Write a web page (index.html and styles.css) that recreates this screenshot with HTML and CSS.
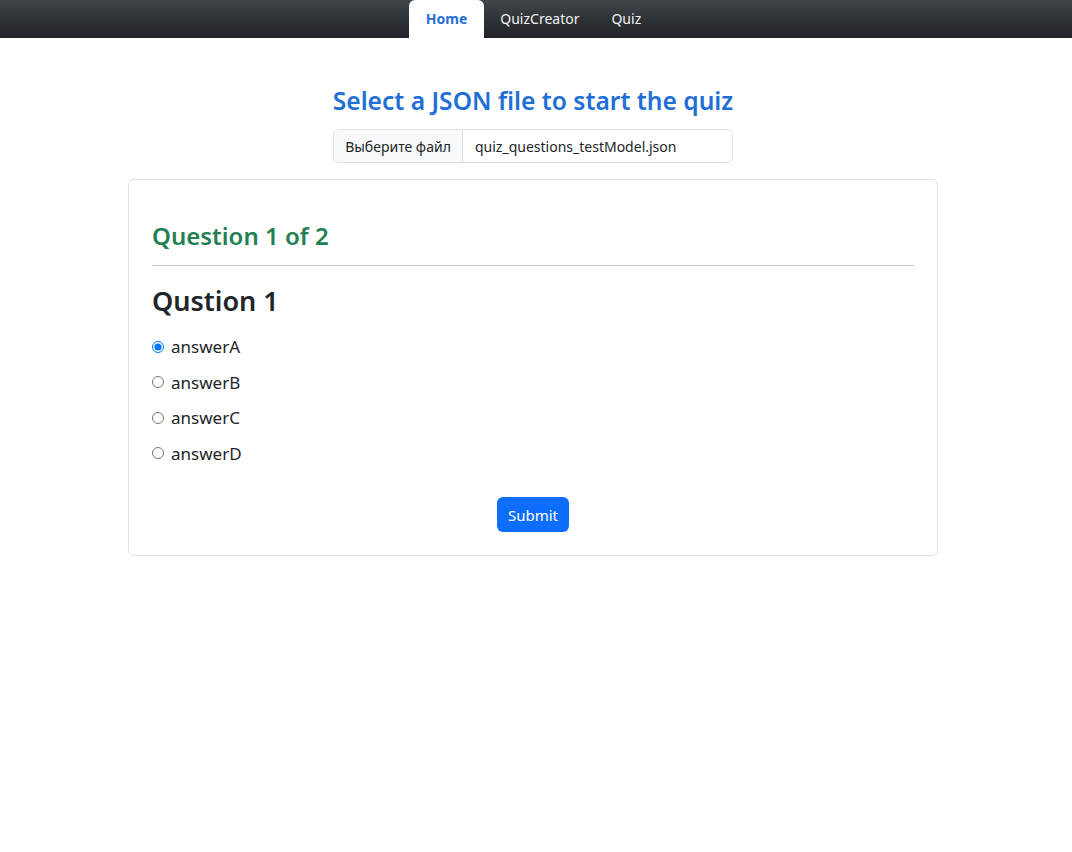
FILE: index.html
```html
<!DOCTYPE html>
<html lang="en">
<head>
<meta charset="utf-8">
<title>Quiz</title>
<link rel="stylesheet" href="styles.css">
</head>
<body>
<nav class="navbar">
  <ul class="nav-tabs">
    <li><a class="nav-link active" href="#">Home</a></li>
    <li><a class="nav-link" href="#">QuizCreator</a></li>
    <li><a class="nav-link" href="#">Quiz</a></li>
  </ul>
</nav>
<main class="page">
  <h2 class="title">Select a JSON file to start the quiz</h2>
  <div class="file-input">
    <span class="file-btn">Выберите файл</span>
    <span class="file-name">quiz_questions_testModel.json</span>
  </div>
  <section class="card">
    <h3 class="progress">Question 1 of 2</h3>
    <hr class="divider">
    <h2 class="question">Qustion 1</h2>
    <form class="answers">
      <label class="answer"><input type="radio" name="a" checked><span>answerA</span></label>
      <label class="answer"><input type="radio" name="a"><span>answerB</span></label>
      <label class="answer"><input type="radio" name="a"><span>answerC</span></label>
      <label class="answer"><input type="radio" name="a"><span>answerD</span></label>
      <div class="actions"><button type="button" class="btn-submit">Submit</button></div>
    </form>
  </section>
</main>
</body>
</html>
```

FILE: styles.css
```css
* { box-sizing: border-box; }
html, body { margin: 0; padding: 0; background: #fff; }
body {
  font-family: "Noto Sans", "Open Sans", sans-serif;
  color: #212529;
  padding-right: 6px;
}
.navbar {
  height: 38px;
  background: linear-gradient(to bottom, #41464b 0%, #2b2f33 60%, #212428 100%);
  display: flex;
  justify-content: center;
  margin-right: -6px;
  padding-right: 6px;
}
.nav-tabs {
  list-style: none;
  margin: 0;
  padding: 0;
  display: flex;
  align-items: flex-end;
  height: 38px;
}
.nav-link {
  display: block;
  height: 38px;
  line-height: 38px;
  padding: 0 16px;
  color: #f2f2f2;
  text-decoration: none;
  font-size: 14px;
}
.nav-link.active {
  background: #fff;
  color: #1f6fd6;
  font-weight: 700;
  border-radius: 6px 6px 0 0;
  padding: 0 17px;
}
.page {
  display: flex;
  flex-direction: column;
  align-items: center;
}
.title {
  margin: 48px 0 0;
  font-size: 24.6px;
  line-height: 30px;
  font-weight: 600;
  color: #1f6fd6;
}
.file-input {
  margin-top: 13px;
  width: 400px;
  height: 34px;
  display: flex;
  border: 1px solid #dee2e6;
  border-radius: 6px;
  overflow: hidden;
  font-size: 14px;
}
.file-btn {
  width: 129px;
  background: #f8f9fa;
  border-right: 1px solid #dee2e6;
  display: flex;
  align-items: center;
  justify-content: center;
  color: #212529;
}
.file-name {
  padding-left: 12px;
  display: flex;
  align-items: center;
}
.card {
  margin-top: 16px;
  width: 810px;
  border: 1px solid #dee2e6;
  border-radius: 6px;
  padding: 39px 23px 23px;
}
.progress {
  margin: 0;
  font-size: 24px;
  line-height: 34px;
  font-weight: 600;
  color: #228052;
}
.divider {
  margin: 12px 0 0;
  border: 0;
  border-top: 1px solid #c8c8c8;
}
.question {
  margin: 18px 0 0;
  font-size: 27px;
  line-height: 34px;
  font-weight: 600;
  color: #212529;
}
.answers {
  margin-top: 15px;
  display: flex;
  flex-direction: column;
  gap: 8.5px;
}
.answer {
  display: flex;
  align-items: center;
  height: 27px;
  font-size: 17px;
  cursor: pointer;
}
.answer input {
  margin: 0 7px 0 0;
  width: 12px;
  height: 12px;
}
.actions {
  display: flex;
  justify-content: center;
  margin-top: 22px;
}
.btn-submit {
  width: 72px;
  height: 35px;
  background: #0d6efd;
  color: #fff;
  border: 0;
  border-radius: 6px;
  font-family: inherit;
  font-size: 15px;
}
```
